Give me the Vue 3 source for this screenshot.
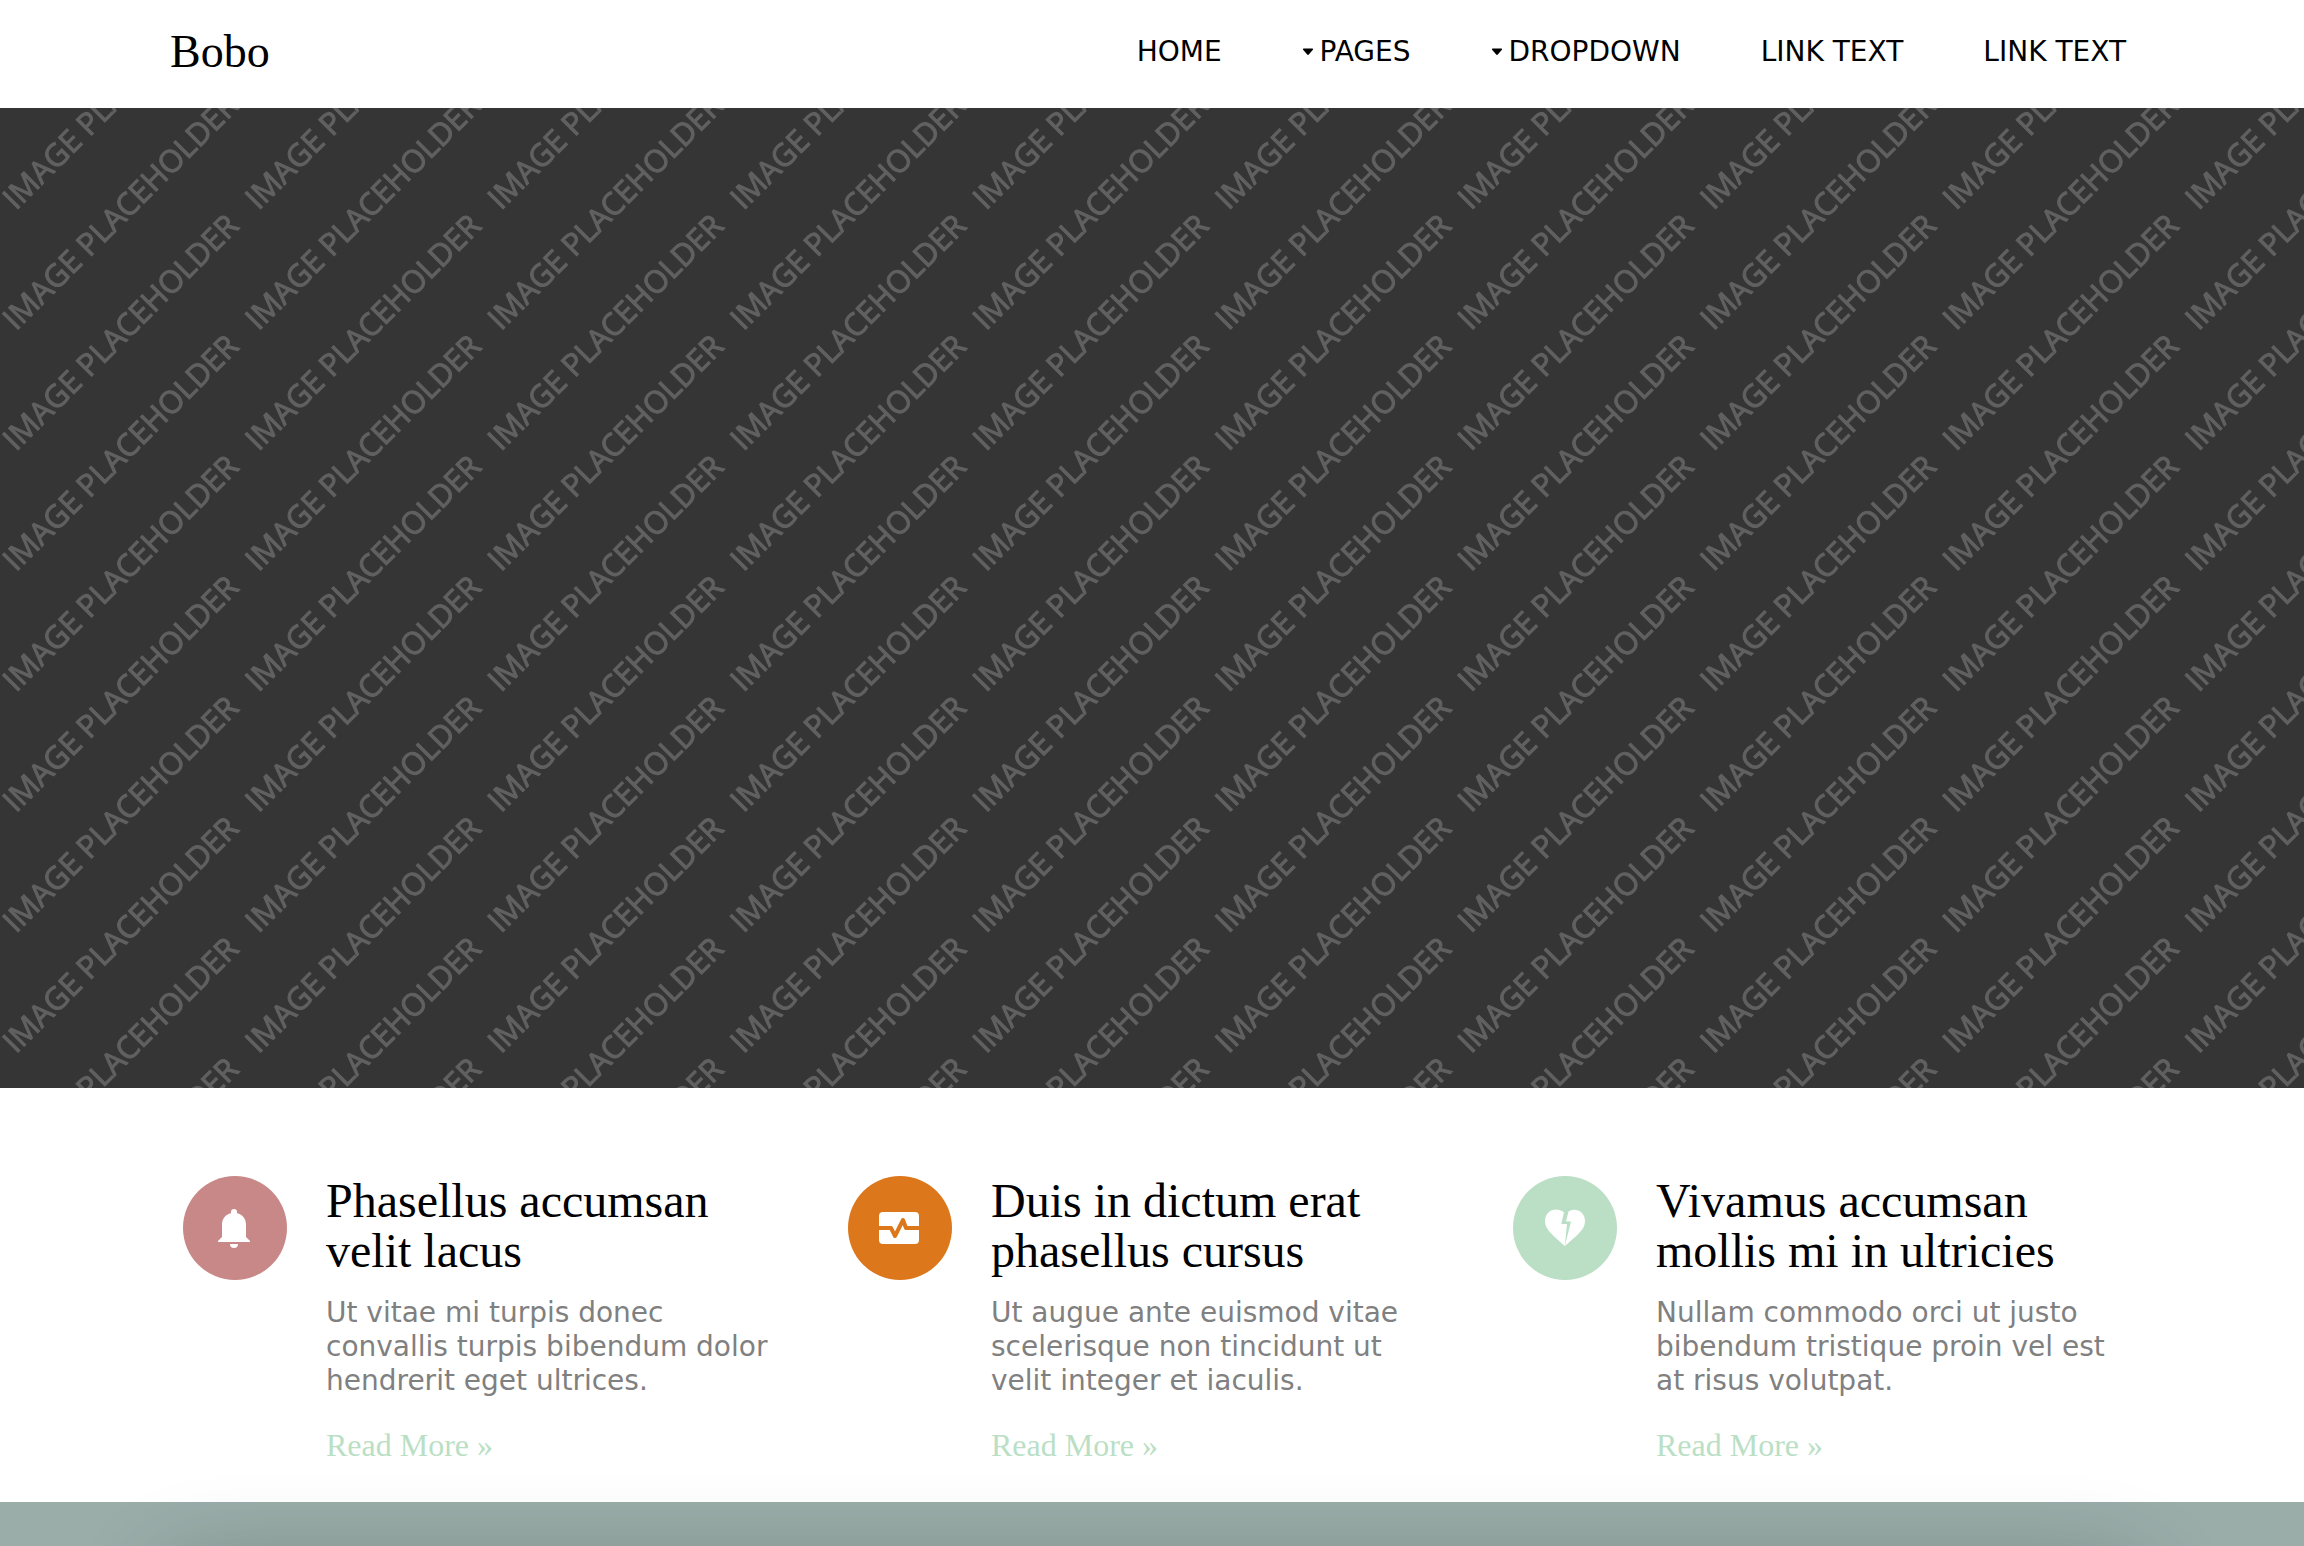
<script setup>
const links = [
  { label: 'HOME' },
  { label: 'PAGES', menu: true },
  { label: 'DROPDOWN', menu: true },
  { label: 'LINK TEXT' },
  { label: 'LINK TEXT' },
]

const features = [
  {
    tone: 'rose',
    icon: 'bell',
    title: 'Phasellus accumsan velit lacus',
    text: 'Ut vitae mi turpis donec convallis turpis bibendum dolor hendrerit eget ultrices.',
  },
  {
    tone: 'orange',
    icon: 'monitor',
    title: 'Duis in dictum erat phasellus cursus',
    text: 'Ut augue ante euismod vitae scelerisque non tincidunt ut velit integer et iaculis.',
  },
  {
    tone: 'mint',
    icon: 'heart',
    title: 'Vivamus accumsan mollis mi in ultricies',
    text: 'Nullam commodo orci ut justo bibendum tristique proin vel est at risus volutpat.',
  },
]
</script>

<template>
  <div class="page">
    <header class="topbar">
      <a class="logo" href="#">Bobo</a>
      <nav class="nav" aria-label="Main">
        <a v-for="(link, i) in links" :key="i" class="nav-link" href="#">
          <svg v-if="link.menu" class="caret" viewBox="0 0 12 8" aria-hidden="true">
            <path d="M1.5 0.5h9q1 0.3.4 1.2L6.8 6.6q-.8.8-1.6 0L1.1 1.7Q.6.8 1.5.5z" fill="currentColor" />
          </svg>
          {{ link.label }}
        </a>
      </nav>
    </header>

    <section class="hero" aria-label="Image placeholder">
      <svg width="100%" height="100%">
        <defs>
          <pattern id="placeholder" width="485" height="241" patternUnits="userSpaceOnUse">
            <template v-for="col in 4" :key="col">
              <text
                v-for="row in 7"
                :key="row"
                class="mark"
                :transform="`translate(${16 + (col - 2) * 242.5} ${103 + (row - 2) * 120.5}) rotate(-45)`"
              >IMAGE PLACEHOLDER</text>
            </template>
          </pattern>
        </defs>
        <rect width="100%" height="100%" fill="url(#placeholder)" />
      </svg>
    </section>

    <main class="features">
      <article v-for="item in features" :key="item.icon" class="feature">
        <span class="badge" :class="item.tone">
          <svg v-if="item.icon === 'bell'" viewBox="0 0 64 64" aria-hidden="true">
            <path d="M31 13a3 3 0 0 1 3 3v1.200c5.500 1.300 9 5.500 9 11.300V41l4 4v1H15v-1l4-4V28.500c0-5.800 3.500-10 9-11.300V16a3 3 0 0 1 3-3zM27 48h8a4 4 0 0 1-8 0z" />
          </svg>
          <svg v-else-if="item.icon === 'monitor'" viewBox="0 0 64 64" aria-hidden="true">
            <rect x="11" y="16" width="40" height="32" rx="4" />
            <path class="pulse" d="M10 32h13l4 8 8-16 3 8h14" />
          </svg>
          <svg v-else viewBox="0 0 64 64" aria-hidden="true">
            <path d="M31 16.500C23 10 12 15 12 25c0 9 8 14 19.800 25L34 28h-5.800zM35.500 15.500C43 11 52 16 52 25c0 9-8 14-20.200 25L38 25.500h-5z" />
          </svg>
        </span>
        <div class="copy">
          <h2>{{ item.title }}</h2>
          <p>{{ item.text }}</p>
          <a class="more" href="#">Read More »</a>
        </div>
      </article>
    </main>

    <section class="band">
      <div class="panel"></div>
    </section>
  </div>
</template>

<style>
body {
  margin: 0;
}
</style>

<style scoped>
.page {
  display: flex;
  flex-direction: column;
  height: 100vh;
  overflow: hidden;
  background: #fff;
  color: #000;
  font-family: "DejaVu Sans", Verdana, sans-serif;
  font-size: 28px;
  line-height: 34px;
}
a {
  color: inherit;
  text-decoration: none;
}
.topbar {
  display: flex;
  align-items: center;
  justify-content: space-between;
  flex: none;
  box-sizing: border-box;
  height: 108px;
  padding: 0 178px 4px 170px;
}
.logo {
  font-family: "Liberation Serif", Georgia, serif;
  font-size: 46px;
  line-height: 50px;
}
.nav {
  display: flex;
  gap: 80px;
}
.nav-link {
  display: flex;
  align-items: center;
  gap: 6px;
  white-space: nowrap;
}
.caret {
  width: 12px;
  height: 8px;
}
.hero {
  flex: none;
  height: 980px;
  background: #353535;
}
.hero svg {
  display: block;
}
.mark {
  fill: #606060;
  stroke: #606060;
  stroke-width: 1px;
  font-family: "Open Sans", sans-serif;
  font-size: 31px;
}
.features {
  display: grid;
  grid-template-columns: repeat(3, 1fr);
  gap: 67px;
  flex: none;
  padding: 88px 193px 38px 183px;
}
.feature {
  display: flex;
  align-items: flex-start;
  gap: 39px;
}
.badge {
  display: flex;
  align-items: center;
  justify-content: center;
  flex: none;
  width: 104px;
  height: 104px;
  border-radius: 50%;
}
.badge svg {
  width: 64px;
  height: 64px;
  fill: #fff;
}
.rose { background: #c98888; }
.orange { background: #dc771b; }
.mint { background: #badfc5; }
.badge .pulse {
  fill: none;
  stroke: #dc771b;
  stroke-width: 4;
  stroke-linejoin: round;
}
h2 {
  margin: 0 0 20px;
  font-family: "Liberation Serif", Georgia, serif;
  font-size: 48px;
  font-weight: 400;
  line-height: 50px;
}
p {
  margin: 0 0 30px;
  color: #808080;
}
.more {
  color: #badfc5;
  font-family: "Liberation Serif", serif;
  font-size: 32px;
}
.band {
  flex: 1;
  background: #9aada9;
}
.panel {
  height: 600px;
  margin: 76px 170px 0;
  box-shadow: 0 0 90px rgba(0, 0, 0, 0.3);
}
</style>
